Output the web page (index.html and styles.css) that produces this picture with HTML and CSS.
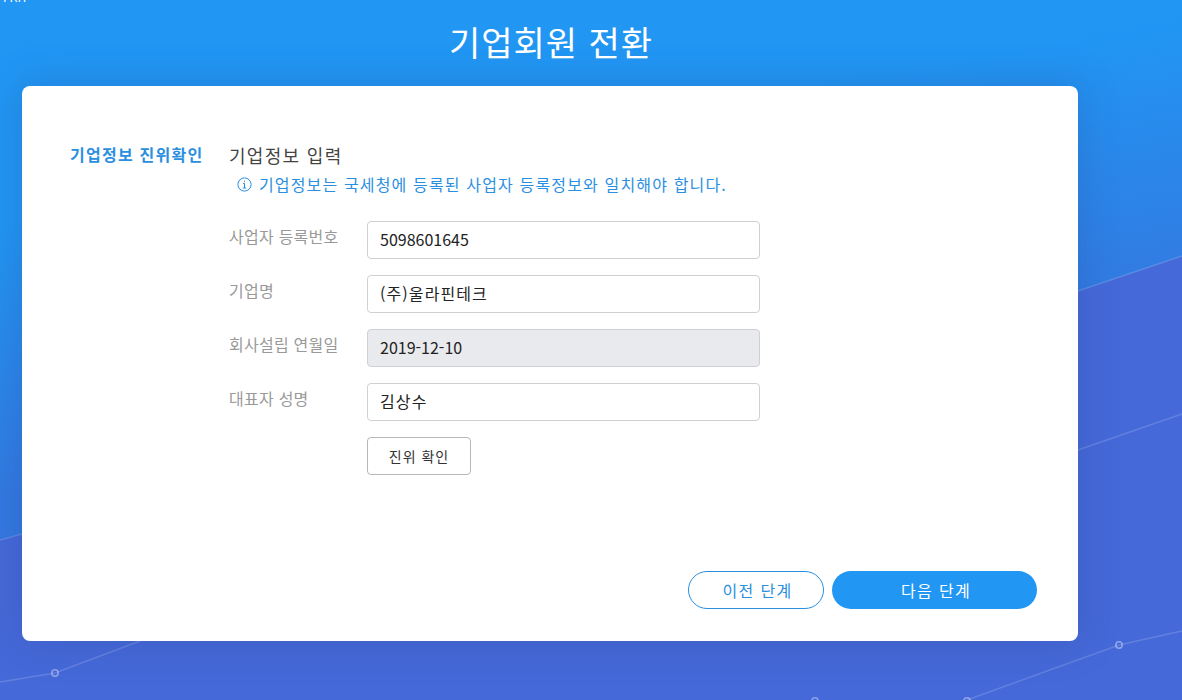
FILE: index.html
```html
<!DOCTYPE html>
<html lang="ko">
<head>
    <meta charset="UTF-8">
    <meta name="viewport" content="width=device-width, initial-scale=1.0">
    <title>기업회원 전환</title>
    <link rel="stylesheet" href="styles.css">
</head>
<body>
    <!-- background network lines -->
    <svg class="bg-lines" width="1182" height="700" viewBox="0 0 1182 700">
        <polygon class="bg-dark" points="0,540 22,534 1078,291 1182,256 1182,700 0,700"/>
        <polyline class="bg-line" points="0,540 22,534"/>
        <polyline class="bg-line" points="1078,291 1182,256"/>
        <polyline class="bg-line" points="1078,450 1182,414"/>
        <polyline class="bg-line" points="0,682 55,673 140,641"/>
        <polyline class="bg-line" points="967,700 1119,645 1182,631"/>
        <circle class="bg-dot" cx="55" cy="673" r="3.2"/>
        <circle class="bg-dot" cx="1119" cy="645" r="3.2"/>
        <circle class="bg-dot" cx="815" cy="701" r="3.2"/>
        <circle class="bg-dot" cx="967" cy="701" r="3.2"/>
    </svg>

    <div class="cut-label">FKH</div>

    <div class="page">
        <h1 class="page-title">기업회원 전환</h1>

        <div class="card">
            <div class="card-body">
                <div class="step-name">기업정보 진위확인</div>

                <div class="step-content">
                    <h2 class="section-title">기업정보 입력</h2>
                    <p class="notice">
                        <svg class="notice-icon" width="15" height="15" viewBox="0 0 15 15">
                            <circle cx="7.5" cy="7.5" r="6.6"/>
                            <path d="M7.5 6.4v4.6M7.5 3.6v1.5M6 6.4h1.5M5.8 11h3.4"/>
                        </svg>
                        기업정보는 국세청에 등록된 사업자 등록정보와 일치해야 합니다.
                    </p>

                    <form class="info-form">
                        <div class="input-group">
                            <label for="bizNo">사업자 등록번호</label>
                            <input type="text" id="bizNo" value="5098601645">
                        </div>
                        <div class="input-group">
                            <label for="company">기업명</label>
                            <input type="text" id="company" class="kor-input" value="(주)울라핀테크">
                        </div>
                        <div class="input-group">
                            <label for="foundDate">회사설립 연월일</label>
                            <input type="text" id="foundDate" value="2019-12-10" disabled>
                        </div>
                        <div class="input-group">
                            <label for="ceo">대표자 성명</label>
                            <input type="text" id="ceo" class="kor-input" value="김상수">
                        </div>
                        <button type="button" class="check-btn">진위 확인</button>
                    </form>
                </div>
            </div>

            <div class="card-footer">
                <button type="button" class="prev-btn">이전 단계</button>
                <button type="button" class="next-btn">다음 단계</button>
            </div>
        </div>
    </div>
</body>
</html>
```

FILE: styles.css
```css
* {
    box-sizing: border-box;
}

html, body {
    height: 700px;
    margin: 0;
    overflow: hidden;
}

body {
    font-family: "Noto Sans CJK KR", "Noto Sans", sans-serif;
    background: linear-gradient(170deg, #2196f3 25%, #3379e1 55%);
    color: #333;
}

.bg-lines {
    position: absolute;
    top: 0;
    left: 0;
}

.bg-dark {
    fill: #4569d9;
}

.bg-line {
    fill: none;
    stroke: rgba(255, 255, 255, 0.16);
    stroke-width: 1.5;
}

.bg-dot {
    fill: none;
    stroke: rgba(255, 255, 255, 0.4);
    stroke-width: 1.5;
}

.cut-label {
    position: absolute;
    top: -12px;
    left: 3px;
    color: #fff;
    font-size: 12px;
}

.page {
    position: relative;
    width: 1056px;
    margin-left: 22px;
}

.page-title {
    height: 86px;
    margin: 0;
    padding: 17px 0 0 2px;
    color: #fff;
    font-size: 34px;
    font-weight: 400;
    line-height: 50px;
    letter-spacing: 1px;
    text-align: center;
}

.card {
    height: 555px;
    background-color: #fff;
    border-radius: 8px;
    box-shadow: 0 0 40px rgba(40, 60, 130, 0.25);
    display: flex;
    flex-direction: column;
    justify-content: space-between;
}

.card-body {
    display: flex;
    padding: 56px 0 0 48px;
}

.step-name {
    width: 159px;
    color: #2b8fdf;
    font-size: 16px;
    font-weight: 700;
    line-height: 24px;
    letter-spacing: 1.25px;
}

.section-title {
    margin: 0;
    color: #444;
    font-size: 18px;
    font-weight: 400;
    line-height: 26px;
    letter-spacing: 1.3px;
}

.notice {
    display: flex;
    align-items: center;
    gap: 7px;
    margin: 5px 0 0 8px;
    color: #2b8fdf;
    font-size: 16px;
    line-height: 22px;
    letter-spacing: 1.15px;
}

.notice-icon {
    fill: none;
    stroke: #2b8fdf;
    stroke-width: 1;
}

.info-form {
    margin-top: 26px;
}

.input-group {
    display: flex;
    margin-bottom: 16px;
}

label {
    width: 138px;
    padding-top: 4px;
    color: #999;
    font-size: 16px;
    line-height: 22px;
    letter-spacing: 0.25px;
}

input {
    width: 393px;
    height: 38px;
    padding: 0 12px 2px;
    border: 1px solid #ced0d4;
    border-radius: 4px;
    background-color: #fff;
    color: #222;
    font-family: inherit;
    font-size: 16px;
}

.kor-input {
    letter-spacing: 1.1px;
}

input:disabled {
    background-color: #e9eaee;
    color: #222;
}

button {
    font-family: inherit;
    cursor: pointer;
}

.check-btn {
    display: block;
    width: 104px;
    height: 38px;
    margin-left: 138px;
    border: 1px solid #b5b7ba;
    border-radius: 4px;
    background-color: #fff;
    color: #333;
    font-size: 14px;
    letter-spacing: 1px;
}

.card-footer {
    display: flex;
    justify-content: flex-end;
    gap: 8px;
    padding: 0 41px 32px 0;
}

.prev-btn,
.next-btn {
    height: 38px;
    padding: 0 0 0 3px;
    border-radius: 19px;
    font-size: 16px;
    letter-spacing: 1.3px;
}

.prev-btn {
    width: 136px;
    border: 1px solid #2b8fdf;
    background-color: #fff;
    color: #2b8fdf;
}

.next-btn {
    width: 205px;
    border: none;
    background-color: #2196f3;
    color: #fff;
}
```
